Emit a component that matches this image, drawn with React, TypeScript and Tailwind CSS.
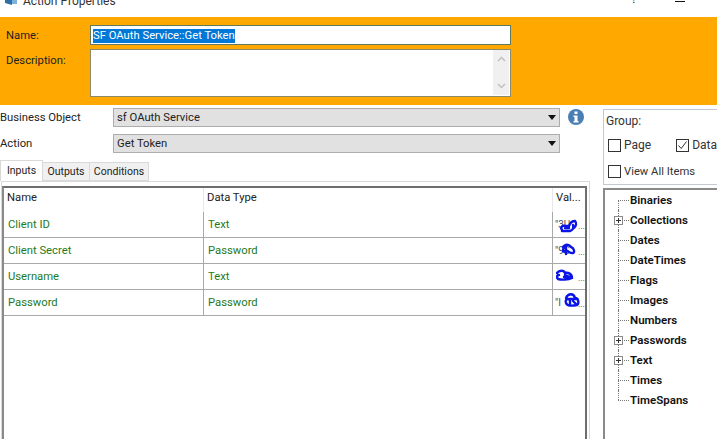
import React from "react";

const rows = [
  { name: "Client ID", type: "Text", val: '"3U', scribble: "M6 15 C4 12 6 10 10 11 L13 11 C14 8 16 6 19 6 C21 8 20 11 18 13 M6 16 L14 16 C17 15 18 13 17 10 M9 13 L13 13" },
  { name: "Client Secret", type: "Password", val: '"9S', scribble: "M7 6 C9 3 13 3 15 6 C18 7 19 11 17 12 C14 13 12 9 9 10 C7 12 6 9 8 7 M10 4 L10 13" },
  { name: "Username", type: "Text", val: "", scribble: "M1 6 C3 3 8 3 9 6 C12 5 16 7 16 11 C12 13 5 13 2 12 C0 10 1 8 3 8 M9 8 L14 10 M8 10 L14 11" },
  { name: "Password", type: "Password", val: '"I', scribble: "M10 5 C12 0 18 0 19 5 C23 5 23 11 21 12 C16 13 11 13 10 10 C9 7 10 6 13 6 L20 6 M14 6 L14 11 M17 8 L20 11" },
];

const tree = [
  { label: "Binaries", first: true },
  { label: "Collections", plus: true },
  { label: "Dates" },
  { label: "DateTimes" },
  { label: "Flags" },
  { label: "Images" },
  { label: "Numbers" },
  { label: "Passwords", plus: true },
  { label: "Text", plus: true },
  { label: "Times" },
  { label: "TimeSpans", last: true },
];

function Caret() {
  return (
    <svg width="8" height="5" viewBox="0 0 8 5" className="shrink-0">
      <path d="M0 0H8L4 5Z" fill="#111" />
    </svg>
  );
}

function Check({ checked }: { checked?: boolean }) {
  return (
    <span className="w-[13px] h-[13px] border border-[#333] bg-white flex items-center justify-center shrink-0">
      {checked && (
        <svg width="11" height="11" viewBox="0 0 11 11">
          <path d="M1.5 5.5L4.2 8.5L9.5 1.5" fill="none" stroke="#333" strokeWidth="1" />
        </svg>
      )}
    </span>
  );
}

function Select({ value }: { value: string }) {
  return (
    <div className="w-[447px] h-[19px] ml-auto bg-[#e1e1e1] border border-[#adadad] flex items-center pl-[3px] pr-[3px]">
      <span className="flex-1 text-[#222] pt-[1px]">{value}</span>
      <span className="mr-[-1px] pr-[1px]">
        <Caret />
      </span>
    </div>
  );
}

function Row({ name, type, val, scribble }: (typeof rows)[number]) {
  return (
    <div className="flex h-[26px] border-b border-[#a9a9a9] text-[#1e7a1e] items-stretch">
      <div className="w-[199px] pl-[4px] flex items-center">{name}</div>
      <div className="w-[349px] border-l border-[#a9a9a9] pl-[4px] flex items-center">{type}</div>
      <div className="flex-1 border-l border-[#a9a9a9] flex items-center relative overflow-hidden text-[#555] pl-[2px]">
        <span className="text-[10px] leading-none">{val}</span>
        <svg width="26" height="20" viewBox="0 0 26 20" className="absolute left-[3px] top-[3px]">
          <path d={scribble} fill="none" stroke="#0a14e6" strokeWidth="2.4" strokeLinecap="round" />
        </svg>
        <span className="absolute right-0 bottom-[6px] text-[9px] leading-none text-[#444]">...</span>
      </div>
    </div>
  );
}

function TreeRow({ label, plus, last, first }: { label: string; plus?: boolean; last?: boolean; first?: boolean }) {
  return (
    <div className="h-[20px] flex items-center relative pl-[25px] font-semibold text-[11.5px] text-[#111]">
      <span
        className={`absolute left-[13px] border-l border-dotted border-[#777] ${
          last ? "top-0 h-[10px]" : first ? "top-[10px] h-[10px]" : "top-0 h-[20px]"
        }`}
      />
      <span className="absolute left-[13px] top-[10px] w-[11px] border-t border-dotted border-[#777]" />
      {plus && (
        <span className="absolute left-[9px] top-[6px] w-[9px] h-[9px] border border-[#8a8a8a] bg-white flex items-center justify-center">
          <svg width="7" height="7" viewBox="0 0 7 7">
            <path d="M1 3.5H6M3.5 1V6" stroke="#333" strokeWidth="1" />
          </svg>
        </span>
      )}
      {label}
    </div>
  );
}

export default function App() {
  return (
    <div className="w-[717px] h-[439px] overflow-hidden bg-white flex flex-col text-[11.25px] leading-[14px] text-[#222] font-['Roboto','Liberation_Sans',sans-serif]">
      <div className="h-[17px] flex items-end relative overflow-hidden shrink-0">
        <svg width="16" height="16" viewBox="0 0 16 16" className="absolute left-[3px] top-[-8px]">
          <path d="M2 5H9V13L2 11Z" fill="#2f6fa8" />
          <path d="M9 3H14V12H9Z" fill="#7fb0d8" />
        </svg>
        <span className="absolute left-[23px] top-[-8px] text-[12px] leading-[18px] text-[#333]">Action Properties</span>
        <span className="absolute left-[631px] top-[-9px] text-[12px] leading-[16px] text-[#111]">?</span>
        <span className="absolute left-[675px] top-[1px] w-[10px] border-t border-[#111]" />
      </div>

      <div className="h-[88px] bg-[#ffa800] flex shrink-0 pt-[8px] pl-[6px]">
        <div className="w-[84px] flex flex-col">
          <div className="h-[20px] flex items-center pt-[1px]">Name:</div>
          <div className="mt-[5px] h-[20px] flex items-center pt-[1px]">Description:</div>
        </div>
        <div className="w-[421px] flex flex-col gap-[4px]">
          <div className="h-[20px] bg-white border border-[#5f7a5f] flex items-center pl-[2px] pt-[1px]">
            <span className="bg-[#0078d7] text-white whitespace-nowrap leading-[14px]">SF OAuth Service::Get Token</span>
          </div>
          <div className="h-[48px] bg-white border border-[#8a8a6a] flex justify-end pr-[1px]">
            <div className="w-[16px] bg-[#f0f0f0] flex flex-col items-center justify-between py-[6px] mb-[1px]">
              <svg width="9" height="6" viewBox="0 0 9 6">
                <path d="M1 5L4.5 1.5L8 5" fill="none" stroke="#c0c0c0" strokeWidth="1.5" />
              </svg>
              <svg width="9" height="6" viewBox="0 0 9 6">
                <path d="M1 1L4.5 4.5L8 1" fill="none" stroke="#c0c0c0" strokeWidth="1.5" />
              </svg>
            </div>
          </div>
        </div>
      </div>

      <div className="flex-1 flex min-h-0">
        <div className="w-[603px] shrink-0 flex flex-col">
          <div className="h-[55px] flex">
            <div className="w-[560px] flex flex-col pt-[3px] gap-[7px]">
              <div className="flex items-center">
                <span className="pt-[1px]">Business Object</span>
                <Select value="sf OAuth Service" />
              </div>
              <div className="flex items-center">
                <span className="pt-[1px]">Action</span>
                <Select value="Get Token" />
              </div>
            </div>
            <div className="pl-[8px] pt-[4px]">
              <svg width="16" height="16" viewBox="0 0 16 16">
                <circle cx="8" cy="8" r="8" fill="#4a7fb5" />
                <rect x="6.5" y="2.5" width="3" height="2.5" fill="#fff" />
                <path d="M5.5 6.5H9.5V12H10.5V13.5H5.5V12H6.5V8H5.5Z" fill="#fff" />
              </svg>
            </div>
          </div>
          <div className="flex h-[21px] items-end text-[10.5px]">
            <div className="w-[43px] h-[21px] bg-white border border-b-0 border-[#d9d9d9] flex items-start pt-[3px] justify-center">Inputs</div>
            <div className="w-[47px] h-[19px] bg-[#f0f0f0] border-y border-r border-[#d9d9d9] flex items-center justify-center pt-[1px]">Outputs</div>
            <div className="w-[59px] h-[19px] bg-[#f0f0f0] border-y border-r border-[#d9d9d9] flex items-center justify-center pt-[1px]">Conditions</div>
          </div>
          <div className="flex-1 ml-[1px] w-[589px] border border-[#d9d9d9] border-b-0 pt-[4px] pr-[2px] min-h-0">
            <div className="h-full bg-white border-2 border-b-0 border-[#6e6e6e] border-l-[#8a8a8a] border-t-[#6e6e6e]">
              <div className="flex h-[24px] items-start">
                <div className="w-[199px] pl-[3px] pt-[3px] text-[#222]">Name</div>
                <div className="w-[349px] border-l border-[#e8e8e8] h-full pl-[3px] pt-[3px]">Data Type</div>
                <div className="flex-1 border-l border-[#e8e8e8] h-full pl-[3px] pt-[3px] overflow-hidden whitespace-nowrap">Val...</div>
              </div>
              {rows.map((r) => (
                <Row key={r.name} {...r} />
              ))}
            </div>
          </div>
        </div>

        <div className="flex-1 flex flex-col min-w-0 pt-[4px]">
          <div className="h-[76px] border border-r-0 border-[#c5cad0] pl-[2px] pt-[4px] text-[#333] overflow-hidden">
            <div className="h-[14px] text-[12px]">Group:</div>
            <div className="flex items-center mt-[10px] h-[14px]">
              <span className="ml-[2px]"><Check /></span>
              <span className="ml-[3px] w-[54px] text-[12px]">Page</span>
              <Check checked />
              <span className="ml-[3px] whitespace-nowrap text-[12px]">Data</span>
            </div>
            <div className="flex items-center mt-[12px] h-[14px]">
              <span className="ml-[2px]"><Check /></span>
              <span className="ml-[3px] pt-[1px] whitespace-nowrap">View All Items</span>
            </div>
          </div>
          <div className="flex-1 mt-[3px] border-l-2 border-t-2 border-[#8a8a8a] min-h-0">
            {tree.map((t) => (
              <TreeRow key={t.label} {...t} />
            ))}
          </div>
        </div>
      </div>
    </div>
  );
}
